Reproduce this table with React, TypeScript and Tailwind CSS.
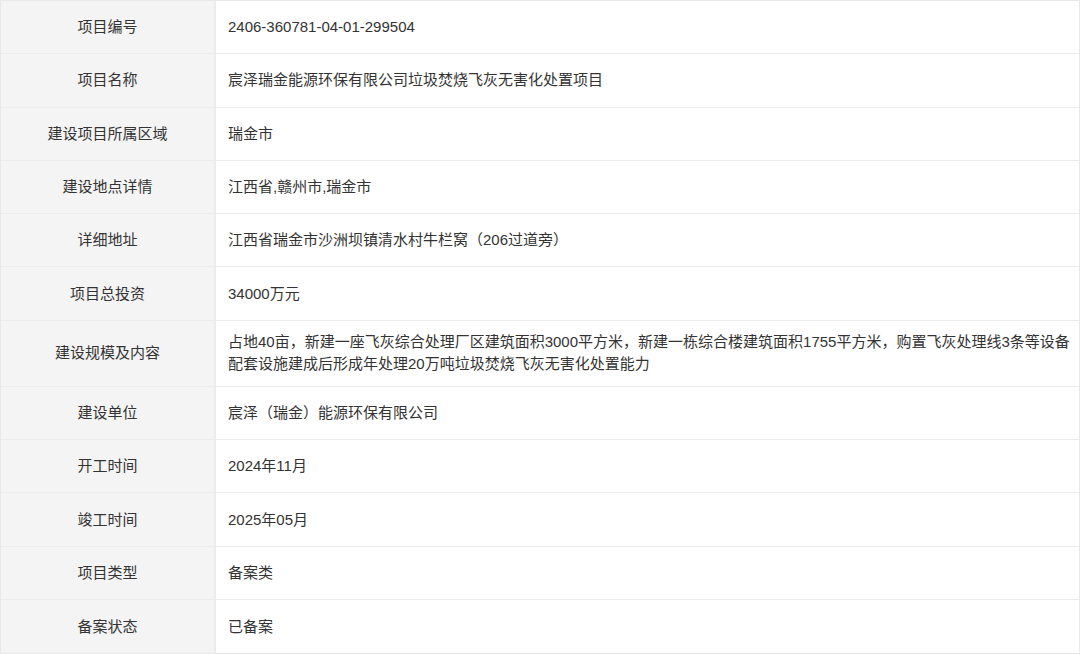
const rows: { label: string; value: React.ReactNode; tall?: boolean }[] = [
    { label: "项目编号", value: "2406-360781-04-01-299504" },
    { label: "项目名称", value: "宸泽瑞金能源环保有限公司垃圾焚烧飞灰无害化处置项目" },
    { label: "建设项目所属区域", value: "瑞金市" },
    { label: "建设地点详情", value: "江西省,赣州市,瑞金市" },
    { label: "详细地址", value: "江西省瑞金市沙洲坝镇清水村牛栏窝（206过道旁）" },
    { label: "项目总投资", value: "34000万元" },
    {
        label: "建设规模及内容",
        tall: true,
        value: (
            <>
                <span className="whitespace-nowrap">占地40亩，新建一座飞灰综合处理厂区建筑面积3000平方米，新建一栋综合楼建筑面积1755平方米，购置飞灰处理线3条等设备</span>
                <br />
                <span className="whitespace-nowrap">配套设施建成后形成年处理20万吨垃圾焚烧飞灰无害化处置能力</span>
            </>
        ),
    },
    { label: "建设单位", value: "宸泽（瑞金）能源环保有限公司" },
    { label: "开工时间", value: "2024年11月" },
    { label: "竣工时间", value: "2025年05月" },
    { label: "项目类型", value: "备案类" },
    { label: "备案状态", value: "已备案" },
]

export default function App() {
    return (
        <div
            className="w-[1080px] h-[654px] overflow-hidden bg-white text-[15px] leading-[22px] text-[#333]"
            style={{ fontFamily: '"Liberation Sans", "Noto Sans CJK SC", sans-serif' }}
        >
            <div className="border border-[#e8e8e8]">
                {rows.map((row, i) => (
                    <div
                        key={row.label}
                        className={`flex ${row.tall ? "h-[66px]" : "h-[53.3px]"} ${i < rows.length - 1 ? "border-b border-[#ececec]" : ""}`}
                    >
                        <div className="w-[215px] shrink-0 flex items-center justify-center bg-[#f4f4f4] border-r-2 border-[#ececec]">
                            {row.label}
                        </div>
                        <div className="flex-1 flex items-center pl-3 pr-2">
                            <div>{row.value}</div>
                        </div>
                    </div>
                ))}
            </div>
        </div>
    )
}
